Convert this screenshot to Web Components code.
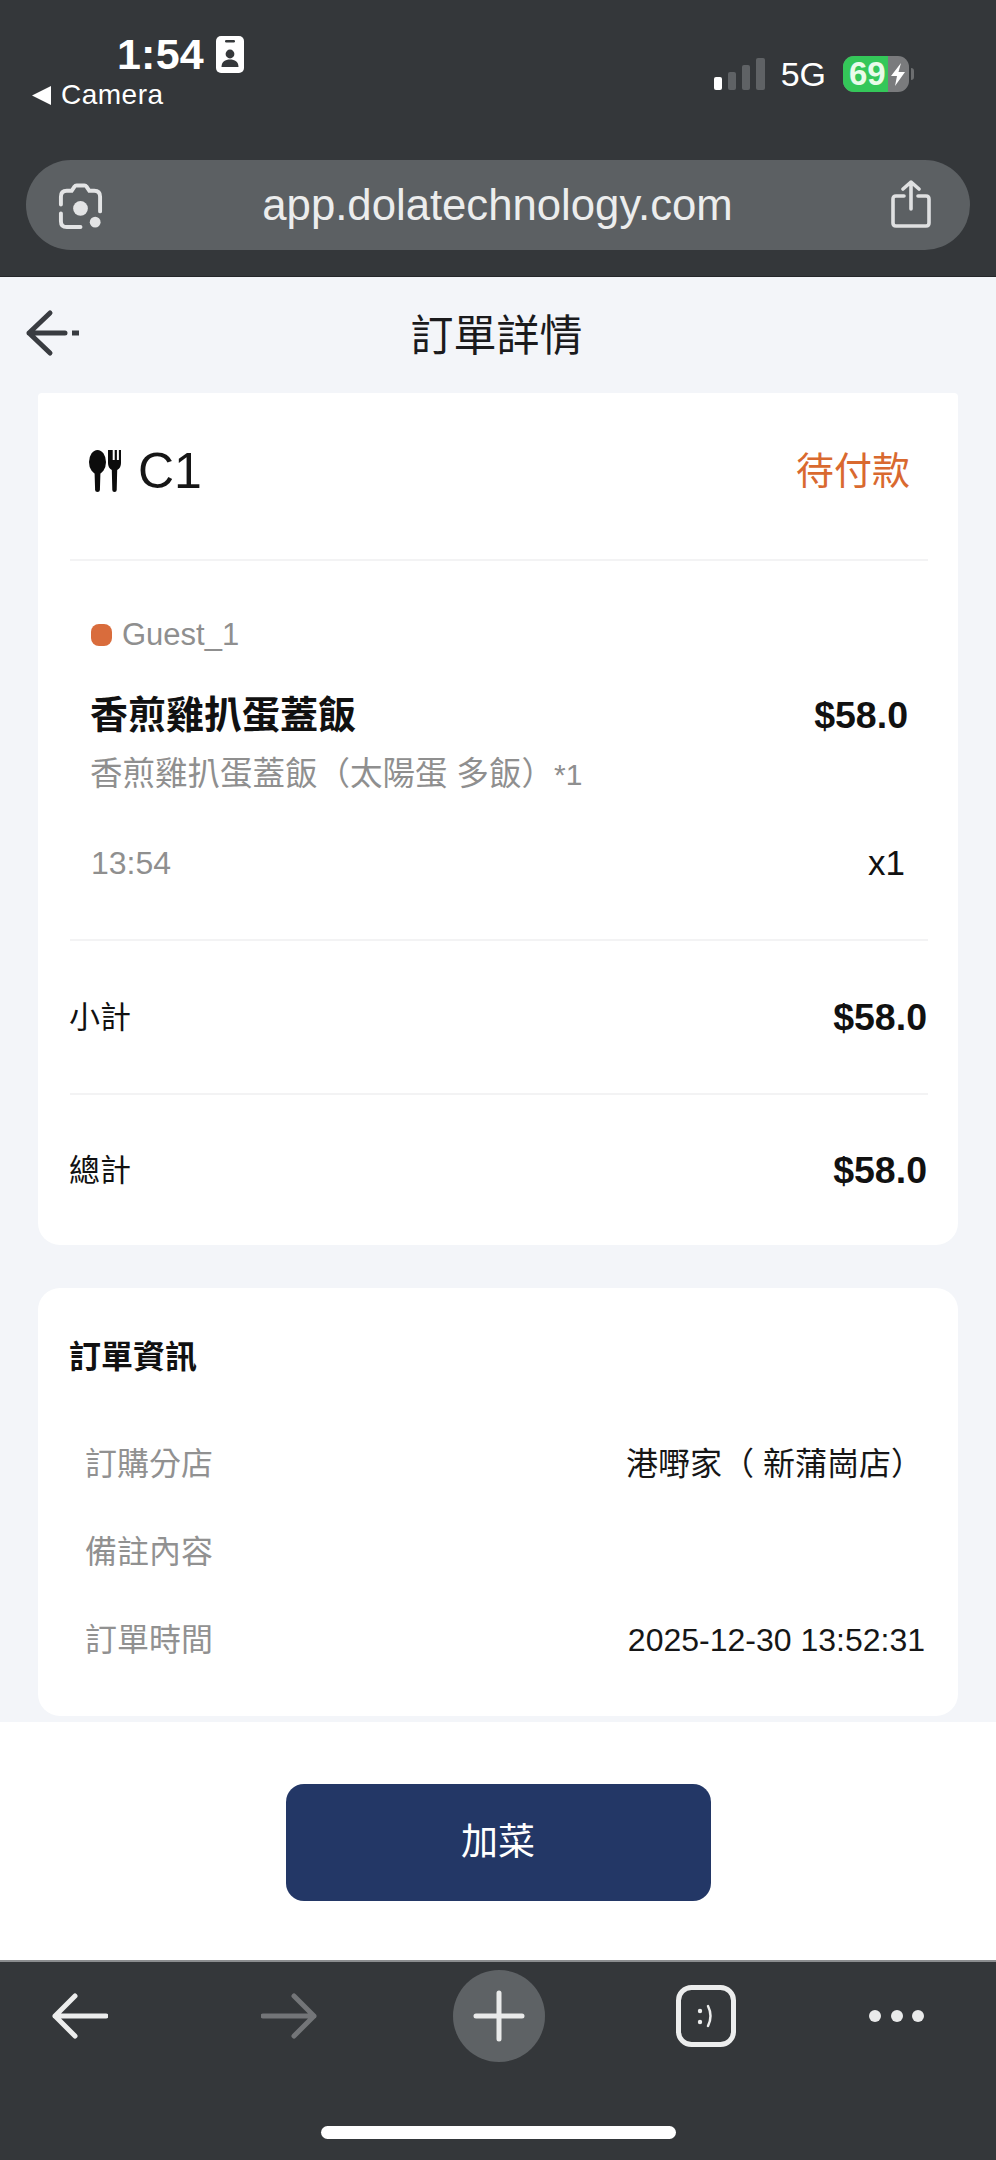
<!DOCTYPE html>
<html lang="zh-Hant">
<head>
<meta charset="utf-8">
<title>訂單詳情</title>
<style>
  html,body{margin:0;padding:0;background:#34373a}
  body{width:996px;height:2160px;overflow:hidden;font-family:"Liberation Sans","Noto Sans CJK TC",sans-serif}
  order-app{display:flex;flex-direction:column;width:996px;height:2160px}
</style>
</head>
<body>
<order-app>
  <browser-top url="app.dolatechnology.com"></browser-top>
  <order-page>
    <page-header title="訂單詳情"></page-header>
    <order-card></order-card>
    <info-card></info-card>
  </order-page>
  <action-bar label="加菜"></action-bar>
  <browser-bottom></browser-bottom>
</order-app>

<script>
const FONT = '"Liberation Sans","Noto Sans CJK TC",sans-serif';
function define(name, html){
  customElements.define(name, class extends HTMLElement{
    connectedCallback(){
      if(this.shadowRoot) return;
      const r = this.attachShadow({mode:'open'});
      r.innerHTML = typeof html === 'function' ? html(this) : html;
    }
  });
}

define('browser-top', el => `
<style>
  :host{display:block;height:277px;flex:none;background:#34373a;color:#fff;font-family:${FONT};box-sizing:border-box;border-bottom:1px solid #25272a}
  .status{display:flex;justify-content:space-between;height:160px}
  .left{padding:35px 0 0 32px}
  .clock{display:flex;align-items:center;gap:12px;margin-left:85px;height:38px;font-size:43px;font-weight:700;letter-spacing:.2px;line-height:38px}
  .clock svg{display:block}
  .back{display:flex;align-items:center;gap:10px;margin-top:9px;height:26px;font-size:28px;line-height:26px;letter-spacing:.5px}
  .right{display:flex;align-items:flex-start;padding:56px 0 0 0;margin-right:82px}
  .net{font-size:34px;line-height:36px;margin:0 17px 0 16px;height:36px}
  .batt{display:flex;width:66px;height:36px;border-radius:11px;overflow:hidden;background:#7a7b7d;font-size:33px;font-weight:700;line-height:36px}
  .fill{width:45px;flex:none;background:#34c759;padding-left:6px;box-sizing:border-box;white-space:nowrap;color:#e9fbe9}
  .nub{width:3px;height:12px;margin:12px 0 0 2px;background:#6c6e70;border-radius:0 3px 3px 0}
  .url{display:flex;align-items:center;height:90px;margin:0 26px;border-radius:45px;background:#5c6063;color:#eceded}
  .url .lens{margin-left:31px;flex:none}
  .url span{flex:1;text-align:center;font-size:43.700px;line-height:90px;margin-left:0;padding-right:0}
  .url .share{margin-right:39px;flex:none;margin-top:-2px}
</style>
<div class="status">
  <div class="left">
    <div class="clock"><span>1:54</span>
      <svg width="28" height="37" viewBox="0 0 28 37"><rect width="28" height="37" rx="5" fill="#fff"/><rect x="9" y="4" width="10" height="2.4" rx="1.2" fill="#34373a"/><circle cx="14" cy="18" r="4.4" fill="#34373a"/><path d="M5.5 31c0-5.500 3.800-7.600 8.500-7.600s8.500 2.100 8.500 7.600z" fill="#34373a"/></svg>
    </div>
    <div class="back">
      <svg width="19" height="19" viewBox="0 0 19 19"><path d="M19 0v19L0 9.500z" fill="#fff"/></svg><span>Camera</span>
    </div>
  </div>
  <div class="right">
    <svg width="51" height="32" viewBox="0 0 51 32" style="margin-top:2px">
      <rect x="0" y="19" width="8" height="13" rx="2" fill="#fff"/>
      <rect x="14" y="14" width="8" height="18" rx="2" fill="#5f6265"/>
      <rect x="28" y="7" width="8" height="25" rx="2" fill="#5f6265"/>
      <rect x="42" y="0" width="9" height="32" rx="2" fill="#5f6265"/>
    </svg>
    <span class="net">5G</span>
    <div class="batt"><div class="fill">69</div>
      <svg width="21" height="36" viewBox="0 0 21 36"><path d="M13 7 3 20h6l-2 10 10-14h-6.500z" fill="#fff"/></svg>
    </div>
    <div class="nub"></div>
  </div>
</div>
<div class="url">
  <svg class="lens" width="47" height="47" viewBox="0 0 48 48" fill="none" stroke="#e3e4e5" stroke-width="4" stroke-linecap="round">
    <path d="M4 23v-8q0-6 6-6h5l3-4.500q.6-1 2-1h8q1.400 0 2 1L33 9h5q6 0 6 6v15"/>
    <path d="M4 32v8q0 6 6 6h14"/>
    <circle cx="24" cy="27" r="7.500" fill="#e3e4e5" stroke="none"/>
    <circle cx="39" cy="41" r="5.500" fill="#e3e4e5" stroke="none"/>
  </svg>
  <span>${el.getAttribute('url')}</span>
  <svg class="share" width="40" height="48" viewBox="0 0 40 48" fill="none" stroke="#dfe0e1" stroke-width="3.600" stroke-linecap="round" stroke-linejoin="round">
    <path d="M20 29V2M12 9l8-7 8 7"/>
    <path d="M13 16H5q-3 0-3 3v24q0 3 3 3h30q3 0 3-3V19q0-3-3-3h-8"/>
  </svg>
</div>`);

define('order-page', `
<style>
  :host{display:block;height:1445px;flex:none;background:#f3f5f9;overflow:hidden;padding:0 38px;box-sizing:border-box}
</style>
<slot></slot>`);

define('page-header', el => `
<style>
  :host{display:flex;position:relative;height:116px;margin:0 -38px;align-items:center;justify-content:center;font-family:${FONT};box-sizing:border-box;padding:2px 3px 0 0}
  h1{margin:0;font-size:43px;font-weight:400;line-height:60px;color:#1b1b1d}
  svg{position:absolute;left:25px;top:32px}
</style>
<svg width="56" height="48" viewBox="0 0 56 48" fill="none" stroke="#393c41" stroke-width="5" stroke-linecap="round" stroke-linejoin="round">
  <path d="M25 4 4 24l21 20M4 24h36"/><path d="M47 24h7" stroke-linecap="butt"/>
</svg>
<h1>${el.getAttribute('title')}</h1>`);

define('order-card', `
<style>
  :host{display:block;height:852px;background:#fff;border-radius:4px 4px 22px 22px;font-family:${FONT};color:#111;box-sizing:border-box}
  .head{display:flex;justify-content:space-between;align-items:center;height:166px;padding:0 48px 10px 51px;box-sizing:border-box}
  .table{display:flex;align-items:center;gap:12px;font-size:50px;line-height:60px;color:#161616}
  .state{font-size:38px;line-height:50px;color:#d9692f}
  hr{border:0;height:2px;background:#f3f3f4;margin:0 30px 0 32px}
  .item{padding:52px 50px 0 53px;height:378px;box-sizing:border-box}
  .guest{display:flex;align-items:center;height:44px;gap:10px;font-size:31px;color:#8f8f8f;line-height:44px}
  .dot{width:21px;height:22px;border-radius:8px;background:#d96c3c}
  .row{display:flex;justify-content:space-between;align-items:center}
  .name{height:50px;margin-top:33px;font-size:38px;font-weight:700;line-height:50px;margin-left:-1px}
  .price{font-size:37.500px;font-weight:700}
  .sub{height:44px;margin-top:12px;font-size:32.500px;line-height:44px;color:#8f8f8f;white-space:nowrap;margin-left:-1px}
  .sub i{font-style:normal;font-size:30px}
  .time{height:44px;margin-top:45px;font-size:32px;color:#8f8f8f;line-height:44px}
  .time b{font-weight:400;font-size:35px;color:#111;padding-right:3px}
  .sum{display:flex;justify-content:space-between;align-items:center;height:152px;padding:0 31px 6px 31px;box-sizing:border-box;font-size:31px}
  .sum.last{height:150px}
  .sum b{font-size:37.500px;font-weight:700;margin-top:6px}
</style>
<div class="head">
  <div class="table">
    <svg width="37" height="42" viewBox="0 0 37 42" fill="#0c0c0c">
      <ellipse cx="8.500" cy="12" rx="8.500" ry="12"/><path d="M5.500 20h6l-.600 20q-.1 2-2.400 2t-2.400-2z"/>
      <path d="M22 0h1.700v10h2V0h2.200v10h2V0H32v13q0 5-3.800 7l-.5 20q0 2-2.200 2t-2.200-2l-.5-20Q19 18 19 13V0h3z"/>
    </svg>
    <span>C1</span>
  </div>
  <span class="state">待付款</span>
</div>
<hr>
<div class="item">
  <div class="guest"><span class="dot"></span><span>Guest_1</span></div>
  <div class="row name"><span>香煎雞扒蛋蓋飯</span><span class="price">$58.0</span></div>
  <div class="sub">香煎雞扒蛋蓋飯（太陽蛋 多飯）<i>*1</i></div>
  <div class="row time"><span>13:54</span><b>x1</b></div>
</div>
<hr>
<div class="sum"><span>小計</span><b>$58.0</b></div>
<hr>
<div class="sum last"><span>總計</span><b>$58.0</b></div>`);

define('info-card', `
<style>
  :host{display:block;height:428px;margin-top:43px;background:#fff;border-radius:22px;font-family:${FONT};box-sizing:border-box;padding:47px 33px 32px 31px}
  h2{margin:0 0 41px;font-size:32px;font-weight:700;line-height:44px;color:#111}
  .row{display:flex;justify-content:space-between;align-items:center;height:88px;padding-left:16px;font-size:32px;line-height:44px}
  .k{color:#919191}
  .v{color:#161616}
  .store{margin-right:2px}
</style>
<h2>訂單資訊</h2>
<div class="row"><span class="k">訂購分店</span><span class="v store">港嘢家（ 新蒲崗店）</span></div>
<div class="row"><span class="k">備註內容</span></div>
<div class="row"><span class="k">訂單時間</span><span class="v">2025-12-30 13:52:31</span></div>`);

define('action-bar', el => `
<style>
  :host{display:flex;height:238px;flex:none;background:#fff;justify-content:center;padding-top:62px;box-sizing:border-box;font-family:${FONT}}
  button{width:425px;height:117px;margin:0;border:0;border-radius:18px;background:#233766;color:#fff;font:400 37px/117px ${FONT};padding:0}
</style>
<button type="button">${el.getAttribute('label')}</button>`);

define('browser-bottom', `
<style>
  :host{display:block;flex:none;height:200px;background:#34373a;border-top:2px solid #8b8d8f;box-sizing:border-box;overflow:hidden}
  .tools{display:flex;align-items:center;height:92px;margin-top:8px;padding-left:52px}
  .tools svg{flex:none;display:block}
  .home{width:355px;height:13px;border-radius:7px;background:#fff;margin:64px auto 0}
</style>
<div class="tools">
  <svg width="56" height="46" viewBox="0 0 56 46" fill="none" stroke="#eceded" stroke-width="5" stroke-linecap="round" stroke-linejoin="round"><path d="M23 3 3 23l20 20M3 23h51"/></svg>
  <svg style="margin-left:153px" width="56" height="46" viewBox="0 0 56 46" fill="none" stroke="#737578" stroke-width="5" stroke-linecap="round" stroke-linejoin="round"><path d="M33 3l20 20-20 20M53 23H2"/></svg>
  <svg style="margin-left:136px" width="92" height="92" viewBox="0 0 92 92"><circle cx="46" cy="46" r="46" fill="#5e6265"/><path d="M46 23v46M23 46h46" stroke="#e9eaea" stroke-width="5" stroke-linecap="round"/></svg>
  <svg style="margin-left:131px" width="60" height="62" viewBox="0 0 60 62" fill="none"><rect x="2.500" y="2.500" width="55" height="57" rx="13" stroke="#eceded" stroke-width="5"/><circle cx="24" cy="26" r="2.200" fill="#eceded"/><circle cx="24" cy="37" r="2.200" fill="#eceded"/><path d="M32 21q5 10 0 20" stroke="#eceded" stroke-width="2.500" stroke-linecap="round"/></svg>
  <svg style="margin-left:132px" width="57" height="14" viewBox="0 0 57 14" fill="#e9eaea"><circle cx="7" cy="7" r="6"/><circle cx="29" cy="7" r="6"/><circle cx="50" cy="7" r="6"/></svg>
</div>
<div class="home"></div>`);

customElements.define('order-app', class extends HTMLElement{
  connectedCallback(){
    if(this.shadowRoot) return;
    this.attachShadow({mode:'open'}).innerHTML = '<style>:host{display:flex;flex-direction:column;width:996px;height:2160px}</style><slot></slot>';
  }
});
</script>
</body>
</html>
